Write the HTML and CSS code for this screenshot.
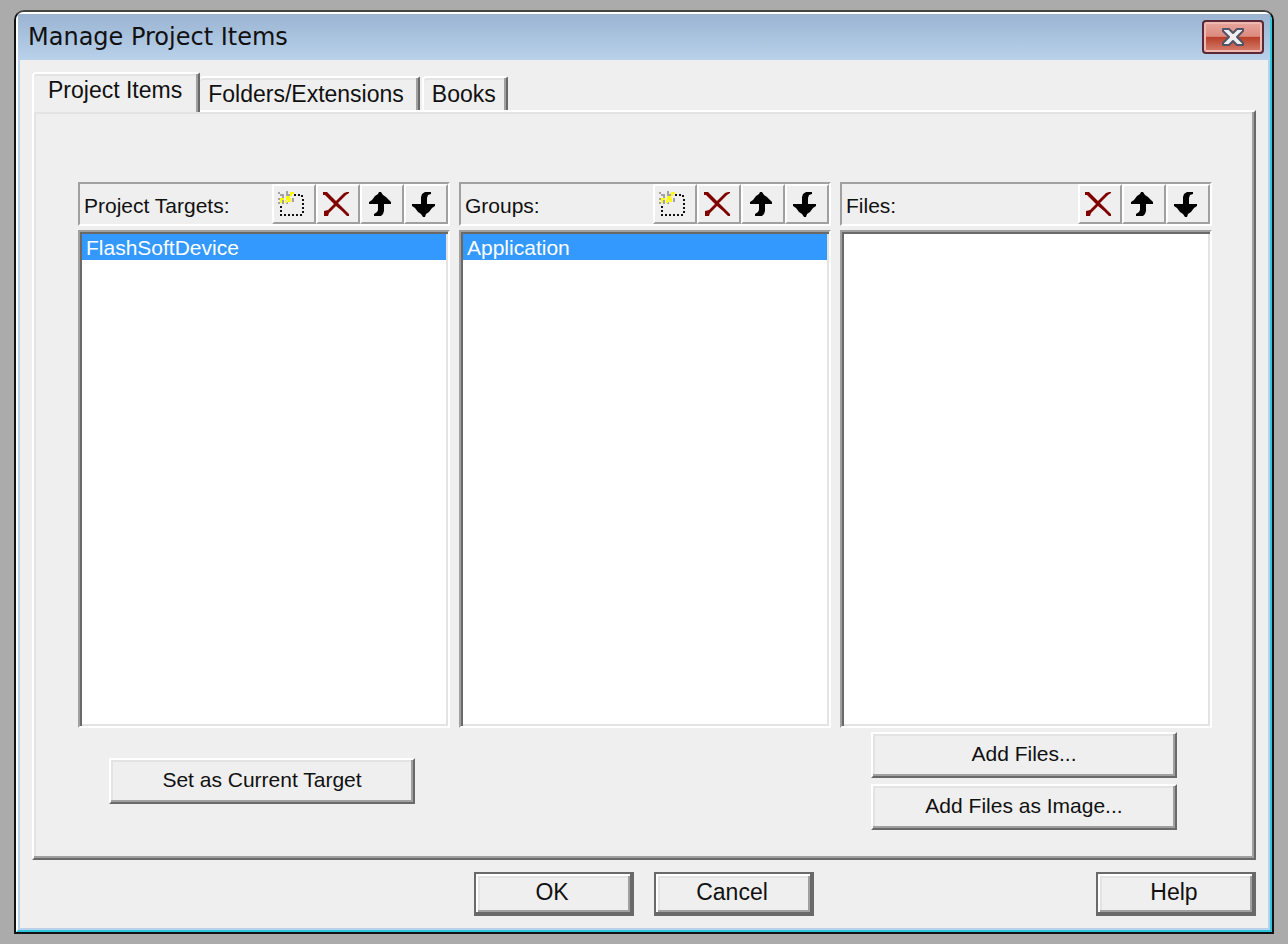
FILE: index.html
```html
<!DOCTYPE html>
<html lang="en">
<head>
    <meta charset="UTF-8">
    <title>Manage Project Items</title>
    <link rel="stylesheet" href="styles.css">
</head>
<body>
    <!-- shared toolbar icons -->
    <svg class="sprite" aria-hidden="true">
        <symbol id="icon-new" viewBox="0 0 28 26">
            <path d="M16 3h2v2h-2zM20 3h2v2h-2zM23 4h2v2h-2zM24 8h2v2h-2zM24 12h2v2h-2zM24 16h2v2h-2zM24 20h2v2h-2zM22 23h2v2h-2zM18 23h2v2h-2zM14 23h2v2h-2zM10 23h2v2h-2zM6 23h2v2H6zM2 23h2v2H2zM2 19h2v2H2zM2 15h2v2H2z" fill="#111"/>
            <path d="M0 1h2v2H0zM2 3h4v2H2zM8 0h2v5H8zM4 5h2v2H4zM10 3h2v2h-2zM14 7h2v4h-2zM0 11h2v2H0zM4 9h2v4H4zM8 11h2v2H8zM0 7h2v2H0z" fill="#a3a3a3"/>
            <path d="M12 1h4v2h-4zM12 3h2v2h-2zM8 5h4v2H8zM2 7h4v2H2zM8 7h5v2H8zM2 9h2v3H2zM10 9h3v2h-3zM7 9h2v3H7z" fill="#ffff00"/>
        </symbol>
        <symbol id="icon-delete" viewBox="0 0 28 26">
            <path d="M1 1h4l9 9 8-8 3-1h2v1l-3 2-8 8 6 6 5 5v2h-2l-5-5-6-5-7 7-1 3H2v-5l4-1 6-6-4-4-5-5H1z" fill="#800000"/>
        </symbol>
        <symbol id="icon-up" viewBox="0 0 24 26">
            <path d="M11 1h2l2 3 3 2 3 3 2 2v2h-7v7l-1 3-2 2H6v-2l3-2 1-2v-6H1v-2l3-2 3-4 3-2z" fill="#000"/>
        </symbol>
        <symbol id="icon-down" viewBox="0 0 24 26">
            <path d="M13 1h6v2l-3 1-1 3v6h8v2l-3 2-3 4-3 2-1 3h-2l-2-3-3-2-3-4-3-2v-2h9V6l1-3z" fill="#000"/>
        </symbol>
    </svg>

    <div class="window">
        <div class="frame">
            <div class="titlebar">
                <h1>Manage Project Items</h1>
                <button class="close" aria-label="Close">
                    <svg width="24" height="20" viewBox="0 0 24 20">
                        <path d="M2 2h6l4 4 4-4h6v2l-6 6 6 6v2h-6l-4-4-4 4H2v-2l6-6-6-6z" fill="#f0f0f0" stroke="#505468" stroke-width="2" stroke-linejoin="round"/>
                    </svg>
                </button>
            </div>

            <div class="content">
                <div class="tabs" role="tablist">
                    <button class="tab active" role="tab" aria-selected="true">Project Items</button>
                    <button class="tab" role="tab">Folders/Extensions</button>
                    <button class="tab last" role="tab">Books</button>
                </div>

                <div class="panel" role="tabpanel">
                    <div class="column">
                        <div class="column-header">
                            <label for="targets">Project Targets:</label>
                            <button class="tool" aria-label="New target"><svg width="28" height="26"><use href="#icon-new"/></svg></button>
                            <button class="tool" aria-label="Delete target"><svg width="28" height="26"><use href="#icon-delete"/></svg></button>
                            <button class="tool" aria-label="Move target up"><svg width="24" height="26"><use href="#icon-up"/></svg></button>
                            <button class="tool" aria-label="Move target down"><svg width="24" height="26"><use href="#icon-down"/></svg></button>
                        </div>
                        <select id="targets" class="list" size="10">
                            <option selected>FlashSoftDevice</option>
                        </select>
                        <div class="actions single">
                            <button class="action">Set as Current Target</button>
                        </div>
                    </div>

                    <div class="column">
                        <div class="column-header">
                            <label for="groups">Groups:</label>
                            <button class="tool" aria-label="New group"><svg width="28" height="26"><use href="#icon-new"/></svg></button>
                            <button class="tool" aria-label="Delete group"><svg width="28" height="26"><use href="#icon-delete"/></svg></button>
                            <button class="tool" aria-label="Move group up"><svg width="24" height="26"><use href="#icon-up"/></svg></button>
                            <button class="tool" aria-label="Move group down"><svg width="24" height="26"><use href="#icon-down"/></svg></button>
                        </div>
                        <select id="groups" class="list" size="10">
                            <option selected>Application</option>
                        </select>
                        <div class="actions"></div>
                    </div>

                    <div class="column">
                        <div class="column-header">
                            <label for="files">Files:</label>
                            <button class="tool" aria-label="Remove file"><svg width="28" height="26"><use href="#icon-delete"/></svg></button>
                            <button class="tool" aria-label="Move file up"><svg width="24" height="26"><use href="#icon-up"/></svg></button>
                            <button class="tool" aria-label="Move file down"><svg width="24" height="26"><use href="#icon-down"/></svg></button>
                        </div>
                        <select id="files" class="list" size="10"></select>
                        <div class="actions">
                            <button class="action">Add Files...</button>
                            <button class="action">Add Files as Image...</button>
                        </div>
                    </div>
                </div>

                <div class="footer">
                    <div class="footer-main">
                        <button class="dialog-btn">OK</button>
                        <button class="dialog-btn">Cancel</button>
                    </div>
                    <button class="dialog-btn help">Help</button>
                </div>
            </div>
        </div>
    </div>
</body>
</html>
```
FILE: styles.css
```css
* { box-sizing: border-box; }
body { margin: 0; padding: 10px 14px; min-height: 100vh; display: flex; background: #ababab; color: #111; font-family: "Liberation Sans", Arial, sans-serif; font-size: 23px; }
button { margin: 0; padding: 0; font: inherit; color: inherit; background: #efefef; border: none; border-radius: 0; }
svg { display: block; }
.sprite { position: absolute; width: 0; height: 0; }

/* window frame */
.window { flex: 1; display: flex; border: 2px solid #111; border-top-color: #444; border-radius: 10px 10px 0 0; background: #efefef; overflow: hidden; }
.frame { flex: 1; display: flex; flex-direction: column; border: 2px solid; border-color: #fff #2cc6de #2cc6de #fff; border-radius: 8px 8px 0 0; }
.titlebar { display: flex; align-items: center; justify-content: space-between; height: 46px; padding: 0 6px 0 10px; background: linear-gradient(#9ab4d2, #b9d1ea); }
.titlebar h1 { margin: 0; font: 24px/30px "DejaVu Sans", sans-serif; }
.close { display: flex; align-items: center; justify-content: center; width: 62px; height: 34px; border: 2px solid #5a2836; border-radius: 4px; background: linear-gradient(#e8a79d, #dc8a7f 48%, #b93f28 50%, #d5806f); box-shadow: inset 0 0 0 2px #efb9b0; }

.content { flex: 1; display: flex; flex-direction: column; padding: 12px; border: 2px solid #b9d1ea; border-top: none; }

/* tabs */
.tabs { display: flex; align-items: flex-end; position: relative; margin-bottom: -2px; }
.tab { height: 34px; margin-bottom: 2px; padding: 0 14px 0 8px; border-top: 2px solid #fff; border-right: 2px solid #696969; border-radius: 4px 2px 0 0; box-shadow: inset -2px 0 #a0a0a0, inset 0 2px #e3e3e3; }
.tab.active { height: 40px; margin-bottom: 0; padding: 0 16px 6px 14px; border-left: 2px solid #fff; }
.tab.last { margin-left: 2px; padding: 0 10px 0 8px; border-left: 2px solid #fff; }

.panel { flex: 1; display: grid; grid-template-columns: repeat(3, 1fr); gap: 9px; padding: 70px 42px 28px 44px; border: 2px solid; border-color: #fff #696969 #696969 #fff; box-shadow: inset -2px -2px #a0a0a0, inset 2px 2px #e3e3e3; }
.column { display: flex; flex-direction: column; min-width: 0; font-size: 21px; }
.column-header { display: flex; height: 44px; border: 2px solid; border-color: #a0a0a0 #fff #fff #a0a0a0; }
.column-header label { flex: 1; padding-left: 4px; line-height: 44px; }
.tool { display: flex; align-items: center; justify-content: center; width: 44px; padding-right: 4px; border: 2px solid; border-color: #fff #a0a0a0 #a0a0a0 #fff; }

/* list boxes */
.list { flex: 1; width: 100%; min-height: 120px; margin: 4px 0; padding: 2px; font: inherit; background: #fff; border: 2px solid; border-color: #a0a0a0 #fff #fff #a0a0a0; border-radius: 0; box-shadow: inset 2px 2px #696969, inset -2px -2px #e3e3e3; outline: none; overflow: hidden; }
.list option { height: 26px; min-height: 26px; padding: 2px 4px 0; line-height: 24px; }
.list option:checked { background: #3399ff linear-gradient(#3399ff, #3399ff); color: #fff; }

.actions { display: flex; flex-direction: column; align-items: center; gap: 6px; height: 98px; padding-right: 4px; }
.actions.single { justify-content: center; }
.action { width: 306px; height: 46px; padding-bottom: 2px; border: 2px solid; border-color: #fff #696969 #696969 #fff; box-shadow: inset -2px -2px #a0a0a0, inset 2px 2px #e3e3e3; }

.footer { display: grid; grid-template-columns: 1fr auto 1fr; margin-top: 12px; }
.footer-main { grid-column: 2; display: flex; gap: 20px; }
.dialog-btn { width: 160px; height: 44px; padding: 0 4px 4px 0; border: 2px solid #696969; box-shadow: inset -2px -2px #696969, inset 2px 2px #fff, inset -4px -4px #a0a0a0, inset 4px 4px #e3e3e3; }
.help { justify-self: end; }
```
